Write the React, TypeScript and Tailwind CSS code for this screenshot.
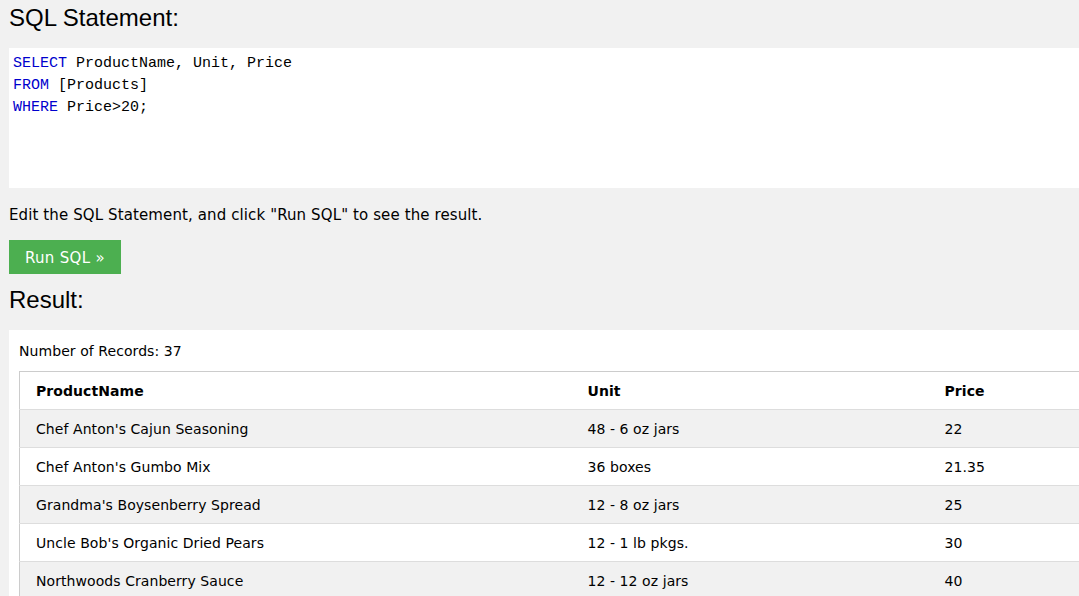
import React from "react";

const rows = [
  ["Chef Anton's Cajun Seasoning", "48 - 6 oz jars", "22"],
  ["Chef Anton's Gumbo Mix", "36 boxes", "21.35"],
  ["Grandma's Boysenberry Spread", "12 - 8 oz jars", "25"],
  ["Uncle Bob's Organic Dried Pears", "12 - 1 lb pkgs.", "30"],
  ["Northwoods Cranberry Sauce", "12 - 12 oz jars", "40"],
];

export default function App() {
  return (
    <div className="w-[1079px] h-[596px] overflow-hidden bg-[#f1f1f1] text-black">
      <div className="w-[1200px] pl-[9px] font-['DejaVu_Sans',Verdana,sans-serif]">
        <h2 className="font-['Liberation_Sans',Arial,sans-serif] text-[24px] leading-[36px] h-[36px] pt-0 mb-[12px]">
          SQL Statement:
        </h2>
        <div className="bg-white h-[140px] pl-[4px] pt-[5px] font-['Liberation_Mono','Courier_New',monospace] text-[15px] leading-[22px]">
          <div><span className="text-[#0000cd]">SELECT</span> ProductName, Unit, Price</div>
          <div><span className="text-[#0000cd]">FROM</span> [Products]</div>
          <div><span className="text-[#0000cd]">WHERE</span> Price&gt;20;</div>
        </div>
        <p className="text-[15px] leading-[22px] mt-[16px] tracking-[0.11px]">
          Edit the SQL Statement, and click "Run SQL" to see the result.
        </p>
        <div className="mt-[14px]">
          <button className="bg-[#4caf50] text-white text-[15px] h-[34px] px-[16px] pt-[2px] leading-[32px] tracking-[0.3px]">
            Run SQL »
          </button>
        </div>
        <h2 className="font-['Liberation_Sans',Arial,sans-serif] text-[24px] leading-[36px] h-[36px] mt-[8px] mb-[12px]">
          Result:
        </h2>
        <div className="bg-white pl-[10px] pt-[11px] pb-[10px] tracking-[0.07px]">
          <div className="text-[14px] leading-[20px] mb-[10px] pl-0">Number of Records: 37</div>
          <table className="border-collapse border border-[#cccccc] w-[1180px] text-[14px]">
            <tbody>
              <tr className="bg-white">
                <th className="text-left font-bold h-[38px] pl-[16px] pt-[2px] w-[552px] border-b border-[#dddddd]">ProductName</th>
                <th className="text-left font-bold h-[38px] pl-[16px] pt-[2px] w-[357px] border-b border-[#dddddd]">Unit</th>
                <th className="text-left font-bold h-[38px] pl-[16px] pt-[2px] border-b border-[#dddddd]">Price</th>
              </tr>
              {rows.map((r, i) => (
                <tr key={i} className={i % 2 === 0 ? "bg-[#f1f1f1]" : "bg-white"}>
                  {r.map((c, j) => (
                    <td key={j} className="h-[38px] pl-[16px] pt-[2px] border-b border-[#dddddd]">{c}</td>
                  ))}
                </tr>
              ))}
            </tbody>
          </table>
        </div>
      </div>
    </div>
  );
}
